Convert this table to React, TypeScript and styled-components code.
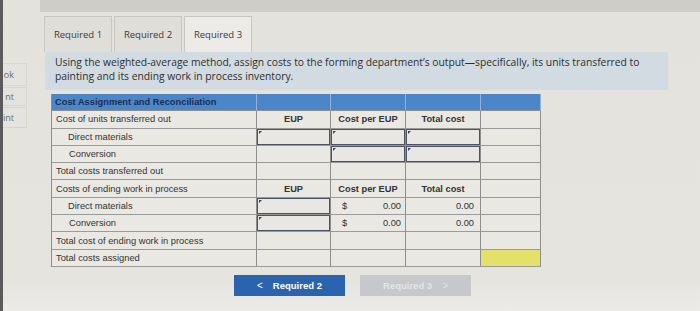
import React from "react";
import styled, { createGlobalStyle } from "styled-components";

const Global = createGlobalStyle`
  html, body { margin: 0; padding: 0; }
  body {
    width: 700px; height: 311px; overflow: hidden;
    background: #e4e2dd;
    font-family: "Open Sans", "DejaVu Sans", sans-serif;
  }
`;

const Page = styled.div`
  display: flex;
  width: 700px;
  height: 311px;
  background: linear-gradient(180deg, #e4e2dd 0%, #e6e4df 90%, #ecebe8 100%);
`;

const Sidebar = styled.div`
  width: 40px;
  flex: none;
  border-left: 3px solid #5a5a5a;
  box-sizing: border-box;
  padding-top: 63px;
  display: flex;
  flex-direction: column;
  gap: 1px;
`;

const SideItem = styled.div<{ $h: number }>`
  width: 24px;
  height: ${(p) => p.$h}px;
  border: 1px solid #d8d6d0;
  border-left: none;
  box-sizing: border-box;
  display: flex;
  align-items: center;
  justify-content: flex-end;
  overflow: hidden;
  font-size: 9px;
  color: #6a6a6a;
  padding-right: 12px;
`;

const Main = styled.div`
  flex: 1;
  display: flex;
  flex-direction: column;
`;

const TopStrip = styled.div`
  height: 12px;
  background: #cfcdc8;
`;

const Content = styled.div`
  padding-left: 4px;
  display: flex;
  flex-direction: column;
`;

const Tabs = styled.div`
  display: flex;
  gap: 2px;
  margin-top: 4px;
`;

const Tab = styled.div<{ $active?: boolean }>`
  width: 68px;
  height: 36px;
  box-sizing: border-box;
  border: 1px solid #c9c7c1;
  border-bottom: none;
  background: ${(p) => (p.$active ? "#edebe7" : "#e0ded8")};
  display: flex;
  align-items: center;
  justify-content: center;
  font-size: 9.5px;
  color: #3a3a3a;
`;

const Instructions = styled.div`
  width: 623px;
  height: 38px;
  box-sizing: border-box;
  margin-left: 1px;
  background: #d2dbe1;
  padding: 3px 0 0 10px;
  font-size: 10.3px;
  line-height: 14px;
  color: #2e2e2e;
  white-space: nowrap;
`;

const Table = styled.div`
  margin: 4px 0 0 7px;
  display: grid;
  grid-template-columns: 205px 74px 75px 75px 60px;
  grid-auto-rows: 17.3px;
  width: 489px;
  border-left: 1px solid #8e8e8e;
  font-family: "Liberation Sans", Arial, sans-serif;
  font-size: 9.3px;
  color: #333;
`;

const HeadCell = styled.div`
  background: #4b87c8;
  border-right: 1px solid #8fb3dc;
  border-bottom: 1px solid #8e8e8e;
  display: flex;
  align-items: center;
  padding-left: 3px;
  font-weight: bold;
  font-size: 9.3px;
  color: #1e2d52;
  white-space: nowrap;
`;

const Cell = styled.div<{ $indent?: number; $align?: "left" | "center" | "right"; $bold?: boolean; $yellow?: boolean }>`
  box-sizing: border-box;
  background: ${(p) => (p.$yellow ? "#e4e16a" : "#eae8e3")};
  border-right: 1px solid #8e8e8e;
  border-bottom: 1px solid #9a9a9a;
  display: flex;
  align-items: center;
  justify-content: ${(p) => (p.$align === "center" ? "center" : p.$align === "right" ? "flex-end" : "space-between")};
  padding: 0 ${(p) => (p.$align === "right" ? 6 : 4)}px 0 ${(p) => 4 + (p.$indent || 0)}px;
  font-weight: ${(p) => (p.$bold ? "bold" : "normal")};
  white-space: nowrap;
  overflow: hidden;
  position: relative;
`;

const InputBox = styled.div`
  position: absolute;
  inset: 0 0 0 0;
  border: 1.5px solid #4c5263;
  background: #e9e7e3;
  &::before {
    content: "";
    position: absolute;
    left: 1px;
    top: 1px;
    border-top: 3px solid #3c4253;
    border-right: 3px solid transparent;
  }
`;

const Dollar = styled.span`
  margin-left: 7px;
`;

const Nav = styled.div`
  display: flex;
  gap: 15px;
  margin: 8px 0 0 190px;
`;

const NavButton = styled.div<{ $disabled?: boolean }>`
  width: 111px;
  height: 21px;
  background: ${(p) => (p.$disabled ? "#c6c8cb" : "#2a63ae")};
  color: ${(p) => (p.$disabled ? "#e4e5e7" : "#ffffff")};
  font-family: "Liberation Sans", Arial, sans-serif;
  font-weight: bold;
  font-size: 9.5px;
  display: flex;
  align-items: center;
  justify-content: center;
  gap: 10px;
`;

const Chev = styled.span`
  font-weight: normal;
  font-size: 10px;
`;

type RowSpec = {
  label: string;
  indent?: number;
  cells: React.ReactNode[];
};

function Row({ label, indent, cells }: RowSpec) {
  return (
    <>
      <Cell $indent={indent}>{label}</Cell>
      {cells}
    </>
  );
}

const E = () => <Cell />;
const In = () => (
  <Cell>
    <InputBox />
  </Cell>
);
const H = ({ t }: { t: string }) => (
  <Cell $align="center" $bold>
    {t}
  </Cell>
);

export default function App() {
  return (
    <>
      <Global />
      <Page>
        <Sidebar>
          <SideItem $h={23}>ok</SideItem>
          <SideItem $h={19}>nt</SideItem>
          <SideItem $h={21}>int</SideItem>
        </Sidebar>
        <Main>
          <TopStrip />
          <Content>
            <Tabs>
              <Tab>Required 1</Tab>
              <Tab>Required 2</Tab>
              <Tab $active>Required 3</Tab>
            </Tabs>
            <Instructions>
              Using the weighted-average method, assign costs to the forming department’s output—specifically, its units transferred to
              <br />
              painting and its ending work in process inventory.
            </Instructions>
            <Table>
              <HeadCell>Cost Assignment and Reconciliation</HeadCell>
              <HeadCell />
              <HeadCell />
              <HeadCell />
              <HeadCell />
              <Row label="Cost of units transferred out" cells={[<H key="a" t="EUP" />, <H key="b" t="Cost per EUP" />, <H key="c" t="Total cost" />, <E key="d" />]} />
              <Row label="Direct materials" indent={12} cells={[<In key="a" />, <In key="b" />, <In key="c" />, <E key="d" />]} />
              <Row label="Conversion" indent={13} cells={[<E key="a" />, <In key="b" />, <In key="c" />, <E key="d" />]} />
              <Row label="Total costs transferred out" cells={[<E key="a" />, <E key="b" />, <E key="c" />, <E key="d" />]} />
              <Row label="Costs of ending work in process" cells={[<H key="a" t="EUP" />, <H key="b" t="Cost per EUP" />, <H key="c" t="Total cost" />, <E key="d" />]} />
              <Row
                label="Direct materials"
                indent={12}
                cells={[
                  <In key="a" />,
                  <Cell key="b">
                    <Dollar>$</Dollar>
                    <span>0.00</span>
                  </Cell>,
                  <Cell key="c" $align="right">0.00</Cell>,
                  <E key="d" />,
                ]}
              />
              <Row
                label="Conversion"
                indent={13}
                cells={[
                  <In key="a" />,
                  <Cell key="b">
                    <Dollar>$</Dollar>
                    <span>0.00</span>
                  </Cell>,
                  <Cell key="c" $align="right">0.00</Cell>,
                  <E key="d" />,
                ]}
              />
              <Row label="Total cost of ending work in process" cells={[<E key="a" />, <E key="b" />, <E key="c" />, <E key="d" />]} />
              <Row label="Total costs assigned" cells={[<E key="a" />, <E key="b" />, <E key="c" />, <Cell key="d" $yellow />]} />
            </Table>
            <Nav>
              <NavButton>
                <Chev>&lt;</Chev>
                <span>Required 2</span>
              </NavButton>
              <NavButton $disabled>
                <span>Required 3</span>
                <Chev>&gt;</Chev>
              </NavButton>
            </Nav>
          </Content>
        </Main>
      </Page>
    </>
  );
}
